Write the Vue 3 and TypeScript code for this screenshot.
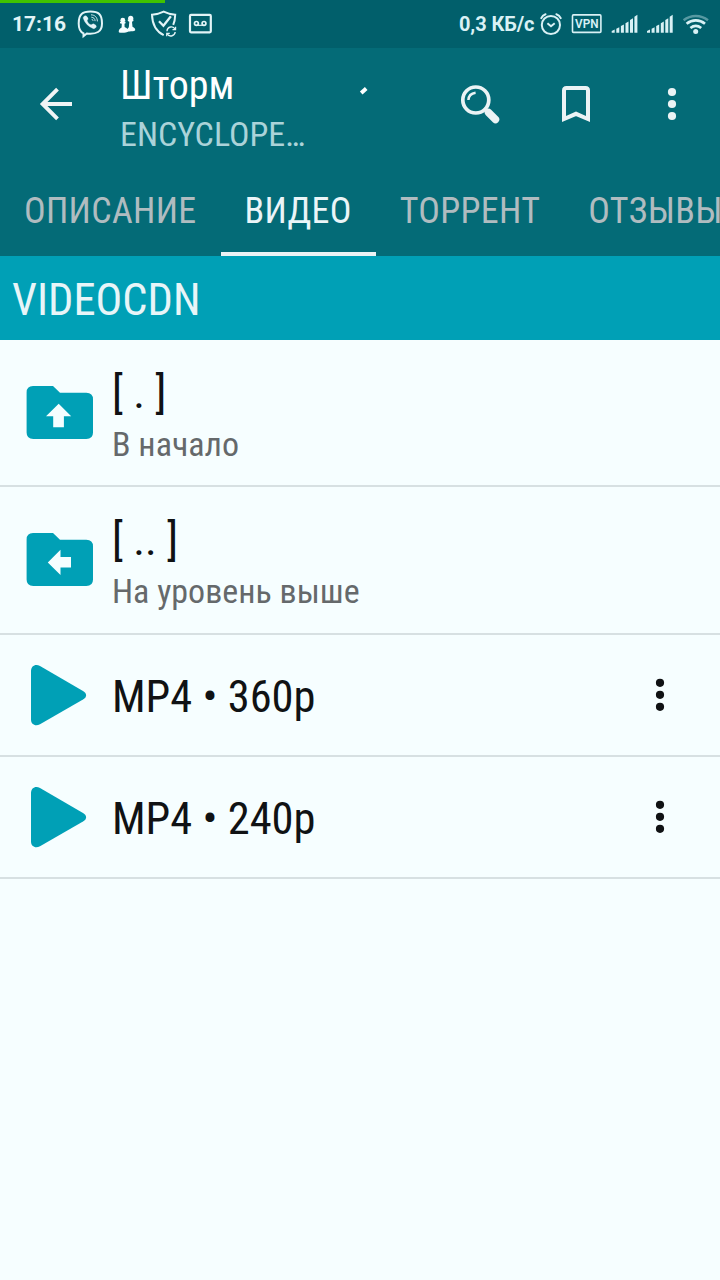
<script setup lang="ts">
interface Tab { label: string; active?: boolean }
interface Row { kind: 'up' | 'back' | 'play'; title: string; note?: string }

const tabs: Tab[] = [
  { label: 'ОПИСАНИЕ' },
  { label: 'ВИДЕО', active: true },
  { label: 'ТОРРЕНТ' },
  { label: 'ОТЗЫВЫ' },
]
const rows: Row[] = [
  { kind: 'up', title: '[ . ]', note: 'В начало' },
  { kind: 'back', title: '[ .. ]', note: 'На уровень выше' },
  { kind: 'play', title: 'MP4 • 360p' },
  { kind: 'play', title: 'MP4 • 240p' },
]
</script>

<template>
  <div class="screen">
    <div class="status">
      <div class="progress"></div>
      <span class="clock">17:16</span>
      <svg class="left-icons" width="150" height="48" viewBox="70 0 150 48" fill="none" stroke="#e2f4f7">
        <path d="M90.500 11.600c-8 0-11.800 2.600-11.800 11.800 0 5 1.500 8.400 4.800 9.900v2.900l3.300-2.700c9.700 1 15.200-1.600 15.200-10.100 0-9.200-3.500-11.800-11.500-11.800z" stroke-width="2" />
        <path d="M84.600 16c1.200-.7 2.300.1 3.300 2.100.8 1.500-.8 1.800-.7 2.700.4 1.800 2 3.400 3.800 4 1 .2 1.500-1.400 2.900-.8 2.100 1 2.900 2.100 2.200 3.200-.9 1.200-1.800 1.800-3.100 1.300-4.900-2-8.100-5.500-9.700-10-.3-1 .2-1.900 1.300-2.500z" fill="#e2f4f7" stroke="#e2f4f7" stroke-width=".3" />
        <path d="M91 14.800c4 .2 6.300 2.600 6.400 6.600M91.300 17.200c2.400.2 3.700 1.500 3.800 3.900M91.700 19.400c.9.1 1.300.5 1.400 1.400" stroke-width=".9" />
        <g fill="#f4fdff" stroke="none">
          <circle cx="122.800" cy="20.200" r="2.400" /><circle cx="130.700" cy="18.300" r="2.600" />
          <path d="M120 21.800h5.500v1.400l-1 .6.100 3.200c1 .5 2.100 1 2.700 1.900l1.500-1.700.5-5.500-1.500-.7v-1.400h5.600v1.400l-1.400.7.5 5.100c1.900.8 2.800 1.900 2.700 3.300-.1 1.200-3.500 1.400-6.500 1.400-2.200 1.200-5.600 1.500-9.700 1.100-.9-2.100.4-4.100 2.600-5.200l.2-3.600-1.800-.6z" />
        </g>
        <path d="M163.700 35.200c-7.400-3.800-11.400-10.200-11.700-20.500 4.200-.3 8.100-1.200 11.700-3 3.600 1.800 7.500 2.700 11.500 3-.1 4-.7 7.300-2 10.200" stroke-width="2" />
        <path d="M159 21.300l4.400 4.400 7.500-9.500" stroke-width="2.300" />
        <path d="M167 31.300c.2-5 6.300-5.700 8-2.200M175.200 32c-.6 4.700-6.500 5.200-8 1.800" stroke-width="1.400" />
        <path d="M175.600 26.700v3h-3.100M166.700 36.300v-3h3.100" stroke-width="1.200" />
        <rect x="190" y="14.900" width="20.800" height="17.400" rx="1" stroke-width="2.200" />
        <circle cx="196.400" cy="23.400" r="1.900" stroke-width="1.700" /><circle cx="204" cy="23.400" r="1.900" stroke-width="1.700" />
        <path d="M196.400 25.300h7.600" stroke-width="1.200" />
      </svg>
      <span class="speed">0,3 КБ/с</span>
      <svg class="right-icons" width="180" height="48" viewBox="540 0 180 48" fill="none" stroke="#d9f1f5">
        <circle cx="550.900" cy="25" r="9.100" stroke-width="2" />
        <path d="M541.300 18.200c.8-1.900 2.300-3.300 4.200-4M556.400 14.200c2 .7 3.500 2.100 4.300 4" stroke-width="2" stroke-linecap="round" />
        <path d="M547.400 23.200l3.600 3 3.700-3" stroke-width="2" />
        <rect x="572.500" y="14.900" width="28.400" height="17.500" rx="1" stroke-width="1.600" />
        <g fill="#d9f1f5" stroke="none">
          <path d="M611.700 32.700v-1.600l3-1.500v3.100zM616.300 32.700v-4l3-1.500v5.500zM620.900 32.700v-6.700l3-1.500v8.200zM625.500 32.700v-9.500l3-1.800v11.300zM630 32.700v-12.700l3-1.800v14.500zM634.400 32.700v-16l3-1.900v17.900z" />
          <path d="M647 32.700v-1.600l3-1.500v3.100zM651.600 32.700v-4l3-1.500v5.500zM656.200 32.700v-6.700l3-1.500v8.200zM660.800 32.700v-9.500l3-1.800v11.300zM665.300 32.700v-12.700l3-1.800v14.500zM669.700 32.700v-16l3-1.900v17.900z" />
          <circle cx="695.700" cy="31.600" r="2.500" />
          <text x="575" y="28" class="vpn" textLength="23.500" lengthAdjust="spacingAndGlyphs">VPN</text>
        </g>
        <path d="M683.600 20.200c7.200-5.700 17.200-5.700 24.400 0" stroke-width="2.400" opacity=".4" />
        <path d="M686.600 23.800c5.500-4.500 12.900-4.500 18.400 0M690.400 28c3.300-2.600 7.500-2.600 10.800 0" stroke-width="2.700" />
      </svg>
    </div>

    <header class="bar">
      <svg class="back-arrow" width="34" height="34" viewBox="0 0 34 34" fill="none" stroke="#f0f4f5" stroke-width="3.900"><path d="M33 17H4.500M18.500 2.100L3.600 17l14.900 14.900" /></svg>
      <div class="heading">
        <div class="title">Шторм</div>
        <div class="subtitle">ENCYCLOPE…</div>
      </div>
      <svg class="actions" width="370" height="80" viewBox="350 64 370 80" fill="none" stroke="#ebf3f5">
        <path d="M361.200 92.900l5-4.300" stroke="#fff" stroke-width="4" />
        <circle cx="475.800" cy="100" r="13" stroke-width="3.700" />
        <path d="M468.400 100c.2-4 3.100-6.800 7.200-7.300" stroke-width="2.500" />
        <path d="M484.800 109l3 3" stroke-width="2.400" />
        <path d="M488.500 112.500l7 7" stroke-width="7.500" stroke-linecap="round" />
        <path d="M564 119V90.500q0-2.500 2.500-2.500h19q2.500 0 2.500 2.500V119l-12-5.200z" stroke-width="4" />
        <g fill="#ebf3f5" stroke="none"><circle cx="672" cy="92" r="4.100" /><circle cx="672" cy="104" r="4.100" /><circle cx="672" cy="116" r="4.100" /></g>
      </svg>
    </header>

    <nav class="tabs">
      <div v-for="tab in tabs" :key="tab.label" class="tab" :class="{ active: tab.active }">{{ tab.label }}</div>
    </nav>

    <div class="section">VIDEOCDN</div>

    <main>
      <div v-for="row in rows" :key="row.title" class="row" :class="row.kind">
        <svg v-if="row.kind === 'play'" class="icon" width="68" height="64" viewBox="0 0 68 64">
          <path d="M5 8C5 3 9.500 .6 14 3L57 28c4.200 2.500 4.200 6 0 8.500L14 61.200C9.500 63.700 5 61.500 5 56.500z" fill="#00a0b6" />
        </svg>
        <svg v-else class="icon" width="68" height="56" viewBox="0 0 68 56">
          <path d="M7 1h20l7 6.800h26.300q6.700 0 6.700 6.700v33q0 6.500-6.700 6.500H7.300Q.6 54 .6 47.500V7.500Q.6 1 7 1z" fill="#00a0b6" />
          <path v-if="row.kind === 'up'" d="M32.700 18.700L45.200 31.300h-7.300v10.900H27.200V31.300H20z" fill="#f5feff" />
          <path v-else d="M21.800 30.500L34.500 17.700v7.300H45v10.500H34.500v7.600z" fill="#f5feff" />
        </svg>
        <div class="text">
          <div class="name">{{ row.title }}</div>
          <div v-if="row.note" class="note">{{ row.note }}</div>
        </div>
        <svg v-if="row.kind === 'play'" class="more" width="10" height="34" viewBox="0 0 10 34" fill="#101214">
          <circle cx="5" cy="4.800" r="4.100" /><circle cx="5" cy="16.800" r="4.100" /><circle cx="5" cy="28.800" r="4.100" />
        </svg>
      </div>
    </main>
  </div>
</template>

<style>
body { margin: 0; background: #f6feff; }
</style>

<style scoped>
.screen {
  width: 720px;
  height: 1280px;
  overflow: hidden;
  background: #f6feff;
  font-family: "Roboto Condensed", Roboto, sans-serif;
  font-stretch: 75%;
}
.status { position: relative; display: flex; align-items: center; height: 48px; background: #015f6b; font-family: Roboto, sans-serif; font-stretch: 100%; }
.progress { position: absolute; left: 0; top: 0; width: 165px; height: 3px; background: #41c300; }
.clock, .speed { font-size: 21px; line-height: 24px; font-weight: 700; color: #e2f4f7; white-space: nowrap; }
.clock { width: 58px; padding-left: 12px; }
.left-icons { flex: none; }
.speed { margin-left: auto; width: 81px; font-size: 20px; letter-spacing: -.1px; color: #d9f1f5; }
.right-icons { flex: none; }
.vpn { font: 600 12px Roboto, sans-serif; }
.bar { display: flex; align-items: flex-start; height: 116px; background: #046b77; }
.back-arrow { flex: none; margin: 39px 0 0 39px; }
.heading { width: 230px; margin-left: 47px; padding-top: 14px; white-space: nowrap; }
.title { font-size: 40px; line-height: 48px; color: #fff; }
.subtitle { font-size: 34px; line-height: 48px; color: #abd3d9; }
.actions { flex: none; margin-top: 16px; }
.tabs { display: flex; height: 92px; overflow: hidden; background: #046b77; }
.tab { flex: none; box-sizing: border-box; padding: 0 24px; font-size: 36px; line-height: 94px; height: 92px; letter-spacing: .32px; color: #b0bcc0; }
.tab.active { color: #ebf5f8; border-bottom: 4px solid #ebf3f5; }
.section { box-sizing: border-box; height: 84px; padding: 2px 0 0 12px; background: #00a0b6; color: #e8f5f8; font-size: 44.5px; line-height: 84px; }
.row { display: flex; box-sizing: border-box; height: 122px; border-bottom: 2px solid #d7e0e2; }
.row.up { height: 147px; }
.row.back { height: 148px; }
.icon { flex: none; margin: 45px 0 0 26px; }
.play .icon { margin-top: 28px; }
.text { flex: 1; margin-left: 18px; padding-top: 27px; white-space: nowrap; }
.play .text { padding-top: 36px; }
.name { font-size: 44.5px; line-height: 52px; color: #101214; }
.note { font-size: 34px; line-height: 40px; margin-top: 5px; color: #65696b; }
.more { flex: none; margin: 43px 55px 0 0; }
</style>
